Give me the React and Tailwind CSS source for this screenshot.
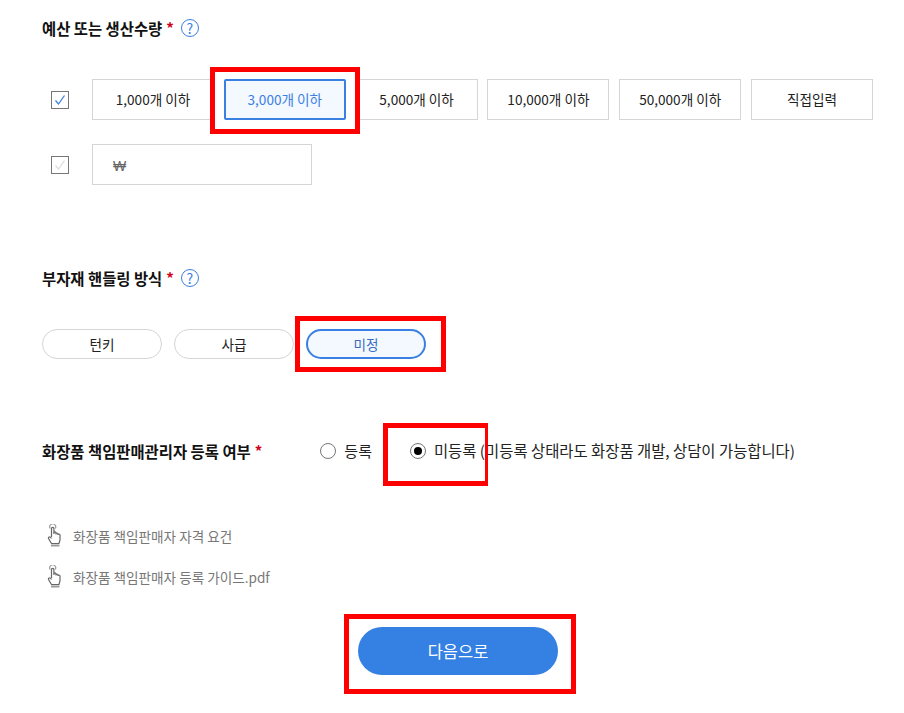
import React from 'react';

const Help = () => (
    <span className="ml-[7px] flex h-[18px] w-[18px] items-center justify-center rounded-full border border-[#3a80e2] text-[14px] leading-none text-[#3a80e2]">?</span>
);

const Heading = ({ children }) => (
    <div className="flex items-center">
        <span className="text-[15.4px] leading-[22px] font-bold text-[#111]">{children}</span>
        <span className="ml-[4px] text-[15px] leading-[22px] font-bold text-[#d0021b]">*</span>
    </div>
);

const Check = ({ color }) => (
    <span className="flex h-[18px] w-[18px] items-center justify-center border border-[#777] bg-white">
        <svg width="12" height="12" viewBox="0 0 12 12" fill="none" stroke={color} strokeWidth="1.3">
            <path d="M1.5 6.5 L4.5 10 L10.5 1.5" />
        </svg>
    </span>
);

const Hand = () => (
    <svg width="16" height="24" viewBox="0 0 16 24" fill="none" stroke="#666" strokeWidth="1.2" className="shrink-0">
        <path d="M3.2 4.5 A3 3 0 1 1 8.2 4.5" stroke="#999" />
        <path d="M4.5 13 V4.5 A1.2 1.2 0 0 1 6.9 4.5 V10 M6.9 10 V9 A1 1 0 0 1 9 9 V10.5 M9 10 A1 1 0 0 1 11 10 V11 M11 11 A1 1 0 0 1 13 11 V16 L12 19.5 H4.5 L1.5 14.5 C1 13 2.8 12 4.5 14.5" />
        <path d="M4 21.5 H12.5" strokeWidth="2" stroke="#999" />
    </svg>
);

const Marked = ({ className }) => (
    <div className={`pointer-events-none absolute border-[5px] border-[#fe0000] ${className}`}></div>
);

const amounts = ['1,000개 이하', '3,000개 이하', '5,000개 이하', '10,000개 이하', '50,000개 이하', '직접입력'];

const App = () => {
    return (
        <div className="relative h-[713px] w-[904px] overflow-hidden bg-white pt-[17px] pl-[42px] text-[13.6px] text-[#222] font-['Noto_Sans_CJK_KR','Noto_Sans',sans-serif]">
            <div className="flex items-center">
                <Heading>예산 또는 생산수량</Heading>
                <Help />
            </div>

            <div className="mt-[40px] flex items-center pl-[9px]">
                <Check color="#3a80e2" />
                <div className="ml-[23px] flex gap-[9.8px]">
                    {amounts.map((label, i) => (
                        <button
                            key={label}
                            className={`h-[41px] w-[122px] text-[13.6px] ${i === 1
                                ? 'rounded-[2px] border-2 border-[#3a80e2] bg-[#f4f8ff] text-[#3a80e2]'
                                : 'border border-[#d5d5d5] text-[#222]'}`}
                        >
                            {label}
                        </button>
                    ))}
                </div>
            </div>

            <div className="mt-[24px] flex items-center pl-[9px]">
                <Check color="#dddddd" />
                <div className="ml-[23px] flex h-[41px] w-[220px] items-center border border-[#d5d5d5] pt-[3px] pl-[20px] text-[14px] text-[#666] font-['Liberation_Sans',sans-serif]">₩</div>
            </div>

            <div className="mt-[82px] flex items-center">
                <Heading>부자재 핸들링 방식</Heading>
                <Help />
            </div>

            <div className="mt-[40px] flex gap-[12px]">
                <button className="h-[30px] w-[120px] rounded-full border border-[#d5d5d5] text-[13.6px]">턴키</button>
                <button className="h-[30px] w-[120px] rounded-full border border-[#d5d5d5] text-[13.6px]">사급</button>
                <button className="h-[30px] w-[120px] rounded-full border-2 border-[#3a80e2] bg-[#f4f8ff] text-[13.6px] text-[#3a6fc0]">미정</button>
            </div>

            <div className="mt-[80px] flex h-[24px] items-center">
                <Heading>화장품 책임판매관리자 등록 여부</Heading>
                <span className="ml-[58px] h-[16px] w-[16px] rounded-full border border-[#767676]"></span>
                <span className="ml-[8px] text-[15px]">등록</span>
                <span className="ml-[38px] flex h-[16px] w-[16px] items-center justify-center rounded-full border border-[#767676]">
                    <span className="h-[8px] w-[8px] rounded-full bg-black"></span>
                </span>
                <span className="ml-[8px] text-[15.4px]">미등록 (미등록 상태라도 화장품 개발, 상담이 가능합니다)</span>
            </div>

            <div className="mt-[61px] flex items-center gap-[10px] pl-[5px] text-[#777]">
                <Hand />
                <span>화장품 책임판매자 자격 요건</span>
            </div>
            <div className="mt-[17px] flex items-center gap-[10px] pl-[5px] text-[#777]">
                <Hand />
                <span>화장품 책임판매자 등록 가이드.pdf</span>
            </div>

            <button className="mt-[38px] ml-[316px] block h-[48px] w-[200px] rounded-full bg-[#3580e3] text-[16.5px] text-white">다음으로</button>

            <Marked className="top-[67px] left-[210px] h-[67px] w-[150px]" />
            <Marked className="top-[316px] left-[295px] h-[56px] w-[151px]" />
            <Marked className="top-[423px] left-[383px] h-[63px] w-[105px] border-r-[3px]" />
            <Marked className="top-[614px] left-[344px] h-[80px] w-[232px]" />
        </div>
    );
};

export default App;
